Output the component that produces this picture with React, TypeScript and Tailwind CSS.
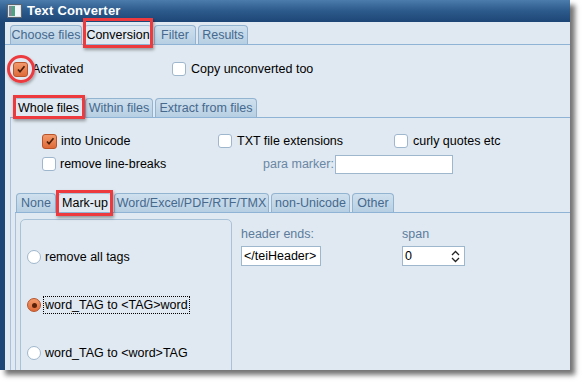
import React from "react";

const font = { fontFamily: '"Liberation Sans", Arial, sans-serif' };

function Check({ checked }: { checked?: boolean }) {
  return checked ? (
    <div className="w-[15px] h-[15px] rounded-[3px] border border-[#b8532a] bg-gradient-to-b from-[#f29a6c] to-[#de6a38] flex items-center justify-center shrink-0">
      <svg width="10" height="10" viewBox="0 0 10 10">
        <path d="M2 5.5 L4 7.8 L8.5 2.2" stroke="#4a1e08" strokeWidth="1.7" fill="none" />
      </svg>
    </div>
  ) : (
    <div className="w-[14px] h-[14px] rounded-[3px] border border-[#9fb7cc] bg-white shrink-0" />
  );
}

function Radio({ checked }: { checked?: boolean }) {
  return checked ? (
    <div className="w-[14px] h-[14px] rounded-full border border-[#b8532a] bg-gradient-to-b from-[#f29a6c] to-[#de6a38] flex items-center justify-center shrink-0">
      <div className="w-[5px] h-[5px] rounded-full bg-[#5a2008]" />
    </div>
  ) : (
    <div className="w-[14px] h-[14px] rounded-full border border-[#9fb7cc] bg-white shrink-0" />
  );
}

function Tab({
  label,
  w,
  selected,
  red,
  redClass,
}: {
  label: string;
  w: string;
  selected?: boolean;
  red?: boolean;
  redClass?: string;
}) {
  return (
    <div
      className={
        "relative h-[19px] shrink-0 rounded-t-[4px] border border-b-0 flex items-center justify-center text-[12.5px] leading-none whitespace-nowrap " +
        w +
        (selected
          ? " bg-[#e0e9f1] border-[#a9c2d8] text-black z-10"
          : " bg-gradient-to-b from-[#cfe0ee] to-[#b7cfe3] border-[#93b4d1] text-[#46698d]")
      }
    >
      <span>{label}</span>
      {red && (
        <div
          className={
            "absolute border-[3px] border-[#ec3a3f] shadow-[1px_2px_3px_rgba(0,0,0,0.35)] pointer-events-none " +
            (redClass || "")
          }
        />
      )}
    </div>
  );
}

export default function App() {
  return (
    <div className="w-[585px] h-[386px] bg-white overflow-hidden whitespace-nowrap" style={font}>
      <div className="w-[570px] h-[370px] flex flex-col shadow-[5px_5px_5px_rgba(0,0,0,0.55)] bg-[#e0e9f1] overflow-hidden">
        {/* title bar */}
        <div className="h-[22px] shrink-0 bg-gradient-to-b from-[#4b7cab] via-[#2c5a8b] to-[#1d4676] flex items-center pl-[7px] gap-[5px]">
          <svg width="15" height="14" viewBox="0 0 15 14">
            <rect x="0.5" y="0.5" width="14" height="13" fill="#dfe6ea" stroke="#5b6670" />
            <rect x="2" y="2" width="3" height="10" fill="#7c8a93" />
            <rect x="5" y="2" width="3" height="10" fill="#4fa383" />
            <rect x="8" y="2" width="5" height="10" fill="#f4f7f9" />
          </svg>
          <span className="text-white font-bold text-[13px] tracking-[0.2px]">Text Converter</span>
        </div>

        <div className="flex-1 flex border-l-[5px] border-[#1d4676] min-h-0">
          <div className="flex-1 flex flex-col min-w-0">
            {/* outer tabs */}
            <div className="h-[23px] shrink-0 flex items-end gap-[2px] pl-[5px] border-b border-[#8fb3d4]">
              <Tab label="Choose files" w="w-[72px]" />
              <Tab label="Conversion" w="w-[68px]" selected red redClass="left-[-2px] right-[-2px] top-[-8px] bottom-[-4px]" />
              <Tab label="Filter" w="w-[42px]" />
              <Tab label="Results" w="w-[50px]" />
            </div>

            {/* activated row */}
            <div className="mt-[16px] h-[16px] flex items-center text-[12.5px] text-black">
              <div className="ml-[8px] relative flex items-center">
                <Check checked />
                <div className="absolute left-[-6px] top-[-7px] w-[28px] h-[28px] rounded-full border-[3px] border-[#ec3a3f] shadow-[1px_2px_3px_rgba(0,0,0,0.3)]" />
              </div>
              <span className="ml-[4px] w-[140px]">Activated</span>
              <Check />
              <span className="ml-[5px]">Copy unconverted too</span>
            </div>

            {/* second tabbed pane */}
            <div className="mt-[20px] ml-[5px] flex-1 flex flex-col min-h-0">
              <div className="h-[21px] shrink-0 flex items-end gap-[2px] pl-[4px] border-b border-[#8fb3d4]">
                <Tab label="Whole files" w="w-[69px]" selected red redClass="left-[-2px] right-[-3px] top-[-4px] bottom-[-2px]" />
                <Tab label="Within files" w="w-[68px]" />
                <Tab label="Extract from files" w="w-[102px]" />
              </div>
              <div className="flex-1 border-l border-[#a9c2d8] flex flex-col min-h-0">
                <div className="mt-[16px] h-[14px] flex items-center text-[12.5px] text-black pl-[31px]">
                  <div className="w-[176px] flex items-center">
                    <Check checked />
                    <span className="ml-[4px]">into Unicode</span>
                  </div>
                  <div className="w-[176px] flex items-center">
                    <Check />
                    <span className="ml-[5px]">TXT file extensions</span>
                  </div>
                  <div className="flex items-center">
                    <Check />
                    <span className="ml-[5px]">curly quotes etc</span>
                  </div>
                </div>
                <div className="mt-[6px] h-[20px] flex items-center text-[12.5px] pl-[31px]">
                  <div className="w-[221px] flex items-center">
                    <Check />
                    <span className="ml-[4px] text-black">remove line-breaks</span>
                  </div>
                  <span className="text-[#6a87a4] w-[72px]">para marker:</span>
                  <div className="w-[118px] h-[19px] bg-white border border-[#9fb7cc]" />
                </div>

                {/* third tabbed pane */}
                <div className="mt-[18px] ml-[4px] flex-1 flex flex-col min-h-0">
                  <div className="h-[21px] shrink-0 flex items-end gap-[2px] pl-[1px] border-b border-[#8fb3d4]">
                    <Tab label="None" w="w-[40px]" />
                    <Tab label="Mark-up" w="w-[54px]" selected red redClass="left-[-3px] right-[-2px] top-[-4px] bottom-[-4px]" />
                    <Tab label="Word/Excel/PDF/RTF/TMX" w="w-[155px]" />
                    <Tab label="non-Unicode" w="w-[79px]" />
                    <Tab label="Other" w="w-[42px]" />
                  </div>
                  <div className="flex-1 border-l border-[#a9c2d8] flex min-h-0 pt-[6px] overflow-hidden">
                    <div className="ml-[4px] w-[212px] h-[200px] shrink-0 rounded-[5px] border border-[#a9c2d8] flex flex-col text-[12.5px] text-black pl-[6px]">
                      <div className="mt-[29px] h-[16px] flex items-center">
                        <Radio />
                        <span className="ml-[4px]">remove all tags</span>
                      </div>
                      <div className="mt-[31px] h-[18px] flex items-center">
                        <Radio checked />
                        <span className="ml-[2px] px-[1px] border border-dotted border-black leading-[16px]">word_TAG to &lt;TAG&gt;word</span>
                      </div>
                      <div className="mt-[31px] h-[16px] flex items-center">
                        <Radio />
                        <span className="ml-[4px]">word_TAG to &lt;word&gt;TAG</span>
                      </div>
                    </div>
                    <div className="ml-[9px] mt-[8px] flex text-[12.5px]">
                      <div className="w-[161px] flex flex-col">
                        <span className="text-[#5d7c9c] leading-[15px]">header ends:</span>
                        <div className="mt-[4px] w-[80px] h-[20px] bg-white border border-[#9fb7cc] flex items-center pl-[2px] text-black">
                          &lt;/teiHeader&gt;
                        </div>
                      </div>
                      <div className="flex flex-col">
                        <span className="text-[#5d7c9c] leading-[15px]">span</span>
                        <div className="mt-[4px] w-[63px] h-[20px] bg-white border border-[#9fb7cc] flex items-center justify-between pl-[2px] pr-[4px] text-black">
                          <span>0</span>
                          <svg width="9" height="13" viewBox="0 0 9 13">
                            <path d="M1 5 L4.5 1.5 L8 5" stroke="#222" strokeWidth="1.3" fill="none" />
                            <path d="M1 8 L4.5 11.5 L8 8" stroke="#222" strokeWidth="1.3" fill="none" />
                          </svg>
                        </div>
                      </div>
                    </div>
                  </div>
                </div>
              </div>
            </div>
          </div>
        </div>
      </div>
    </div>
  );
}
